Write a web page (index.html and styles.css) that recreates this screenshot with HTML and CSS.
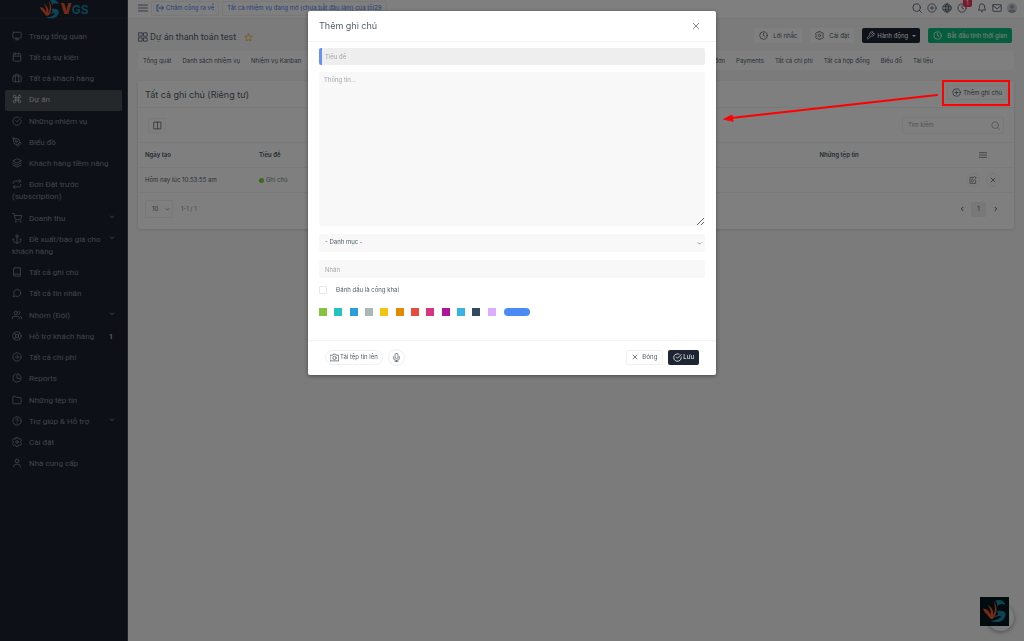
FILE: index.html
```html
<!DOCTYPE html>
<html lang="vi">
<head>
<meta charset="utf-8">
<meta name="viewport" content="width=device-width, initial-scale=1">
<title>Dự án thanh toán test</title>
<link rel="stylesheet" href="styles.css">
</head>
<body>
<svg class="sprite" aria-hidden="true">
  <symbol id="monitor" viewBox="0 0 24 24"><rect x="2" y="3" width="20" height="14" rx="2"/><path d="M8 21h8M12 17v4"/></symbol>
  <symbol id="calendar" viewBox="0 0 24 24"><rect x="3" y="4" width="18" height="18" rx="2"/><path d="M16 2v4M8 2v4M3 10h18"/></symbol>
  <symbol id="case" viewBox="0 0 24 24"><rect x="2" y="7" width="20" height="14" rx="2"/><path d="M8 21V5a2 2 0 0 1 2-2h4a2 2 0 0 1 2 2v16"/></symbol>
  <symbol id="command" viewBox="0 0 24 24"><path d="M18 3a3 3 0 0 0-3 3v12a3 3 0 1 0 3-3H6a3 3 0 1 0 3 3V6a3 3 0 1 0-3 3h12a3 3 0 0 0 0-6z"/></symbol>
  <symbol id="check" viewBox="0 0 24 24"><path d="M22 11v1a10 10 0 1 1-6-9.100M22 4 12 14l-3-3"/></symbol>
  <symbol id="pen" viewBox="0 0 24 24"><path d="m12 19 7-7 3 3-7 7zM18 13l-1.500-7.500L2 2l3.500 14.500L13 18zM2 2l7.600 7.600"/><circle cx="11" cy="11" r="2"/></symbol>
  <symbol id="layers" viewBox="0 0 24 24"><path d="M12 2 2 7l10 5 10-5zM2 12l10 5 10-5M2 17l10 5 10-5"/></symbol>
  <symbol id="repeat" viewBox="0 0 24 24"><path d="m17 1 4 4-4 4M3 11V9a4 4 0 0 1 4-4h14M7 23l-4-4 4-4M21 13v2a4 4 0 0 1-4 4H3"/></symbol>
  <symbol id="cart" viewBox="0 0 24 24"><circle cx="9" cy="21" r="1"/><circle cx="20" cy="21" r="1"/><path d="M1 1h4l2.700 13.400a2 2 0 0 0 2 1.600h9.700a2 2 0 0 0 2-1.600L23 6H6"/></symbol>
  <symbol id="anchor" viewBox="0 0 24 24"><circle cx="12" cy="5" r="3"/><path d="M12 22V8M5 12H2a10 10 0 0 0 20 0h-3"/></symbol>
  <symbol id="book" viewBox="0 0 24 24"><path d="M4 19.500A2.500 2.500 0 0 1 6.500 17H20M6.500 2H20v20H6.500A2.500 2.500 0 0 1 4 19.500v-15A2.500 2.500 0 0 1 6.500 2z"/></symbol>
  <symbol id="message" viewBox="0 0 24 24"><path d="M21 11.500a8.400 8.400 0 0 1-12.700 7.600L3 21l1.900-5.700A8.400 8.400 0 1 1 21 11.500z"/></symbol>
  <symbol id="users" viewBox="0 0 24 24"><path d="M17 21v-2a4 4 0 0 0-4-4H5a4 4 0 0 0-4 4v2M23 21v-2a4 4 0 0 0-3-3.900M16 3.100a4 4 0 0 1 0 7.800"/><circle cx="9" cy="7" r="4"/></symbol>
  <symbol id="buoy" viewBox="0 0 24 24"><circle cx="12" cy="12" r="10"/><circle cx="12" cy="12" r="4"/><path d="m5 5 4.200 4.200M14.800 14.800 19 19M14.800 9.200 19 5M5 19l4.200-4.200"/></symbol>
  <symbol id="right" viewBox="0 0 24 24"><circle cx="12" cy="12" r="10"/><path d="m12 16 4-4-4-4M8 12h8"/></symbol>
  <symbol id="pie" viewBox="0 0 24 24"><path d="M21.200 15.900A10 10 0 1 1 8 2.800M22 12A10 10 0 0 0 12 2v10z"/></symbol>
  <symbol id="folder" viewBox="0 0 24 24"><path d="M22 19a2 2 0 0 1-2 2H4a2 2 0 0 1-2-2V5a2 2 0 0 1 2-2h5l2 3h9a2 2 0 0 1 2 2z"/></symbol>
  <symbol id="help" viewBox="0 0 24 24"><circle cx="12" cy="12" r="10"/><path d="M9 9a3 3 0 0 1 5.900 1c0 2-3 3-3 3M12 17v.1"/></symbol>
  <symbol id="gear" viewBox="0 0 24 24"><circle cx="12" cy="12" r="3"/><path d="M10 1h4l1 3 2 1 3-1 3 4-2 2v4l2 2-3 4-3-1-2 1-1 3h-4l-1-3-2-1-3 1-3-4 2-2v-4L1 8l3-4 3 1 2-1z"/></symbol>
  <symbol id="user" viewBox="0 0 24 24"><path d="M20 22v-2a5 5 0 0 0-5-5H9a5 5 0 0 0-5 5v2"/><circle cx="12" cy="7" r="4.500"/></symbol>
  <symbol id="down" viewBox="0 0 24 24"><path d="m5 8 7 7 7-7"/></symbol>
  <symbol id="prev" viewBox="0 0 24 24"><path d="m16 5-7 7 7 7"/></symbol>
  <symbol id="next" viewBox="0 0 24 24"><path d="m8 5 7 7-7 7"/></symbol>
  <symbol id="menu" viewBox="0 0 24 24"><path d="M1 5h22M1 12h22M1 19h22"/></symbol>
  <symbol id="logout" viewBox="0 0 24 24"><path d="M8 21H3V3h5M8 12h14M17 6l6 6-6 6"/></symbol>
  <symbol id="grid" viewBox="0 0 24 24"><path d="M2 2h8v8H2zM14 2h8v8h-8zM2 14h8v8H2zM14 14h8v8h-8z"/></symbol>
  <symbol id="star" viewBox="0 0 24 24"><path d="m12 2 3.100 6.300 6.900 1-5 4.900 1.200 6.800L12 17.800 5.800 21 7 14.200 2 9.300l6.900-1z"/></symbol>
  <symbol id="search" viewBox="0 0 24 24"><circle cx="11" cy="11" r="9"/><path d="m17.500 17.500 5 5"/></symbol>
  <symbol id="plus" viewBox="0 0 24 24"><circle cx="12" cy="12" r="10"/><path d="M12 8v8M8 12h8"/></symbol>
  <symbol id="globe" viewBox="0 0 24 24"><circle cx="12" cy="12" r="10"/><ellipse cx="12" cy="12" rx="4.500" ry="10"/><path d="M12 2v20M3 8h18M3 16h18"/></symbol>
  <symbol id="clock" viewBox="0 0 24 24"><circle cx="12" cy="12" r="10"/><path d="M12 6v6l4 2"/></symbol>
  <symbol id="bell" viewBox="0 0 24 24"><path d="M18 8A6 6 0 0 0 6 8c0 7-3 9-3 9h18s-3-2-3-9M13.700 21a2 2 0 0 1-3.400 0"/></symbol>
  <symbol id="mail" viewBox="0 0 24 24"><rect x="2" y="4" width="20" height="16" rx="1"/><path d="m2 6 10 8 10-8"/></symbol>
  <symbol id="wrench" viewBox="0 0 24 24"><path d="M14.700 6.300a1 1 0 0 0 0 1.400l1.600 1.600a1 1 0 0 0 1.400 0l3.800-3.800a6 6 0 0 1-8 8l-6.900 6.900a2.100 2.100 0 0 1-3-3l6.900-6.900a6 6 0 0 1 8-8z"/></symbol>
  <symbol id="columns" viewBox="0 0 24 24"><path d="M3 3h18v18H3zM12 3v18"/></symbol>
  <symbol id="edit" viewBox="0 0 24 24"><path d="M11 4H3v18h17v-8M18 2l4 4-9.500 9.500L8 16l.6-4.400z"/></symbol>
  <symbol id="close" viewBox="0 0 24 24"><path d="m4 4 16 16M20 4 4 20"/></symbol>
  <symbol id="camera" viewBox="0 0 24 24"><path d="M1 6h6l2-3h6l2 3h6v15H1z"/><circle cx="12" cy="13" r="4.500"/></symbol>
  <symbol id="mic" viewBox="0 0 24 24"><rect x="8" y="1" width="8" height="14" rx="4"/><path d="M4 10v2a8 8 0 0 0 16 0v-2M12 20v3M8 23h8"/></symbol>
  <symbol id="bird" viewBox="0 0 48 48">
    <path class="orange" d="M2 18c8 1 13 5 14 13 2-7 0-13-5-20 8 5 12 12 10 21 5-8 5-17 1-28 8 10 8 22 1 32-3 4-7 3-9-1C11 30 4 26 2 18z"/>
    <path class="teal" d="M25 4c9-5 17-1 20 7-8-3-13-1-16 4 1-4 0-8-4-11zM29 23c10-2 18 2 16 9-3 11-14 15-29 10 11-1 18-4 21-9-5-1-9 0-13 3 0-3 3-5 7-6-1-3-1-5-2-7z"/>
  </symbol>
</svg>

<div class="app">
  <aside class="sidebar">
    <a class="brand" href="#" aria-label="VGS">
      <svg class="brand-bird"><use href="#bird"/></svg>
      <span class="brand-name"><b>V</b>GS</span>
    </a>
    <ul class="nav">
      <li><a href="#"><svg><use href="#monitor"/></svg>Trang tổng quan</a></li>
      <li><a href="#"><svg><use href="#calendar"/></svg>Tất cả sự kiện</a></li>
      <li><a href="#"><svg><use href="#case"/></svg>Tất cả khách hàng</a></li>
      <li><a class="active" href="#"><svg><use href="#command"/></svg>Dự án</a></li>
      <li><a href="#"><svg><use href="#check"/></svg>Những nhiệm vụ</a></li>
      <li><a href="#"><svg><use href="#pen"/></svg>Biểu đồ</a></li>
      <li><a href="#"><svg><use href="#layers"/></svg>Khách hàng tiềm năng</a></li>
      <li><a href="#"><svg><use href="#repeat"/></svg>Đơn Đặt trước (subscription)</a></li>
      <li><a class="more" href="#"><span><svg><use href="#cart"/></svg>Doanh thu</span><svg class="chev"><use href="#down"/></svg></a></li>
      <li><a class="more" href="#"><span><svg><use href="#anchor"/></svg>Đề xuất/báo giá cho khách hàng</span><svg class="chev"><use href="#down"/></svg></a></li>
      <li><a href="#"><svg><use href="#book"/></svg>Tất cả ghi chú</a></li>
      <li><a href="#"><svg><use href="#message"/></svg>Tất cả tin nhắn</a></li>
      <li><a class="more" href="#"><span><svg><use href="#users"/></svg>Nhóm (Đội)</span><svg class="chev"><use href="#down"/></svg></a></li>
      <li><a class="more" href="#"><span><svg><use href="#buoy"/></svg>Hỗ trợ khách hàng</span><b class="count">1</b></a></li>
      <li><a href="#"><svg><use href="#right"/></svg>Tất cả chi phí</a></li>
      <li><a href="#"><svg><use href="#pie"/></svg>Reports</a></li>
      <li><a href="#"><svg><use href="#folder"/></svg>Những tệp tin</a></li>
      <li><a class="more" href="#"><span><svg><use href="#help"/></svg>Trợ giúp &amp; Hỗ trợ</span><svg class="chev"><use href="#down"/></svg></a></li>
      <li><a href="#"><svg><use href="#gear"/></svg>Cài đặt</a></li>
      <li><a href="#"><svg><use href="#user"/></svg>Nhà cung cấp</a></li>
    </ul>
  </aside>

  <main class="main">
    <header class="topbar">
      <button class="icon-btn" aria-label="Menu"><svg><use href="#menu"/></svg></button>
      <a class="top-link" href="#"><svg><use href="#logout"/></svg>Chấm công ra về</a>
      <a class="top-link" href="#">Tất cả nhiệm vụ đang mở (chưa bắt đầu làm) của tôi29</a>
      <div class="tools">
        <button class="icon-btn" aria-label="Tìm kiếm"><svg><use href="#search"/></svg></button>
        <button class="icon-btn" aria-label="Thêm"><svg><use href="#plus"/></svg></button>
        <button class="icon-btn" aria-label="Ngôn ngữ"><svg><use href="#globe"/></svg></button>
        <button class="icon-btn timer" aria-label="Thời gian"><svg><use href="#clock"/></svg><span class="badge">1</span></button>
        <button class="icon-btn" aria-label="Thông báo"><svg><use href="#bell"/></svg></button>
        <button class="icon-btn" aria-label="Thư"><svg><use href="#mail"/></svg></button>
        <svg class="avatar" viewBox="0 0 24 24"><circle class="disc" cx="12" cy="12" r="12"/><circle cx="12" cy="9" r="5"/><path d="M3 20c2-6 16-6 18 0-5 5-13 5-18 0z"/></svg>
      </div>
    </header>

    <div class="content">
      <div class="heading">
        <div class="heading-title">
          <svg><use href="#grid"/></svg>
          <h1>Dự án thanh toán test</h1>
          <svg class="star"><use href="#star"/></svg>
        </div>
        <div class="actions">
          <button class="btn"><svg><use href="#clock"/></svg>Lời nhắc</button>
          <button class="btn"><svg><use href="#gear"/></svg>Cài đặt</button>
          <button class="btn dark tight"><svg><use href="#wrench"/></svg>Hành động<i class="caret"></i></button>
          <button class="btn green"><svg><use href="#clock"/></svg>Bắt đầu tính thời gian</button>
        </div>
      </div>

      <nav class="tabs">
        <div class="tab-group"><a href="#">Tổng quát</a><a href="#">Danh sách nhiệm vụ</a><a href="#">Nhiệm vụ Kanban</a></div>
        <div class="tab-group end"><a href="#">Hóa đơn</a><a href="#">Payments</a><a href="#">Tất cả chi phí</a><a href="#">Tất cả hợp đồng</a><a href="#">Biểu đồ</a><a href="#">Tài liệu</a></div>
      </nav>

      <section class="card">
        <div class="card-head">
          <h2>Tất cả ghi chú (Riêng tư)</h2>
          <button class="btn tight outline"><svg><use href="#plus"/></svg>Thêm ghi chú</button>
        </div>
        <div class="card-tools">
          <button class="btn square" aria-label="Cột"><svg><use href="#columns"/></svg></button>
          <label class="search"><input type="search" placeholder="Tìm kiếm" aria-label="Tìm kiếm"><svg><use href="#search"/></svg></label>
        </div>
        <table class="table">
          <thead><tr><th class="c-date">Ngày tạo</th><th class="c-title">Tiêu đề</th><th class="c-files">Những tệp tin</th><th class="c-act"><svg><use href="#menu"/></svg></th></tr></thead>
          <tbody><tr><td>Hôm nay lúc 10:53:55 am</td><td><span class="note"><i class="dot"></i>Ghi chú</span></td><td></td>
            <td><div class="row-act"><button class="round" aria-label="Sửa"><svg><use href="#edit"/></svg></button><button class="round" aria-label="Xóa"><svg class="small"><use href="#close"/></svg></button></div></td></tr></tbody>
        </table>
        <div class="card-foot">
          <select class="per-page" aria-label="Số dòng"><option>10</option></select>
          <svg class="foot-chev"><use href="#down"/></svg>
          <span class="range">1-1 / 1</span>
          <div class="pager"><button aria-label="Trước"><svg><use href="#prev"/></svg></button><button class="current">1</button><button aria-label="Sau"><svg><use href="#next"/></svg></button></div>
        </div>
      </section>
    </div>
  </main>
</div>

<div class="chat"><span class="chat-disc"></span><svg><use href="#bird"/></svg></div>

<div class="overlay">
  <form class="modal" role="dialog" aria-labelledby="modal-title">
    <div class="modal-head">
      <h3 id="modal-title">Thêm ghi chú</h3>
      <button type="button" class="icon-btn" aria-label="Đóng"><svg class="mid"><use href="#close"/></svg></button>
    </div>
    <div class="modal-body">
      <input class="field title-field" type="text" placeholder="Tiêu đề" aria-label="Tiêu đề">
      <textarea class="field" placeholder="Thông tin..." aria-label="Thông tin"></textarea>
      <div class="select-wrap">
        <select class="field" aria-label="Danh mục"><option>- Danh mục -</option></select>
        <svg><use href="#down"/></svg>
      </div>
      <input class="field labels" type="text" placeholder="Nhãn" aria-label="Nhãn">
      <label class="public"><input type="checkbox">Đánh dấu là công khai</label>
      <div class="colors">
        <div class="swatches">
          <button type="button" class="s1" aria-label="Xanh lá"></button><button type="button" class="s2" aria-label="Ngọc"></button><button type="button" class="s3" aria-label="Xanh dương"></button><button type="button" class="s4" aria-label="Xám"></button><button type="button" class="s5" aria-label="Vàng"></button><button type="button" class="s6" aria-label="Cam"></button><button type="button" class="s7" aria-label="Đỏ"></button><button type="button" class="s8" aria-label="Hồng"></button><button type="button" class="s9" aria-label="Tím"></button><button type="button" class="s10" aria-label="Xanh nhạt"></button><button type="button" class="s11" aria-label="Xanh đen"></button><button type="button" class="s12" aria-label="Tím nhạt"></button>
        </div>
        <button type="button" class="pill" aria-label="Chọn màu"></button>
      </div>
    </div>
    <div class="modal-foot">
      <button type="button" class="btn upload"><svg><use href="#camera"/></svg>Tải tệp tin lên</button>
      <button type="button" class="btn mic" aria-label="Ghi âm"><svg><use href="#mic"/></svg></button>
      <button type="button" class="btn cancel"><svg class="small"><use href="#close"/></svg>Đóng</button>
      <button type="submit" class="btn dark save"><svg><use href="#check"/></svg>Lưu</button>
    </div>
  </form>
</div>

<svg class="callout" aria-hidden="true">
  <rect x="943" y="81" width="66" height="24"/>
  <path d="M937 95 731 118"/>
  <path class="tip" d="m724 119 8-4 1 6z"/>
</svg>
</body>
</html>
```
FILE: styles.css
```css
* { box-sizing: border-box; }

body {
  margin: 0;
  background: #f6f6f6;
  color: #4e5e6a;
  font: 6px/12px Inter, "Noto Sans", sans-serif;
}

h1, h2, h3 { margin: 0; font-weight: 400; }
a { color: inherit; text-decoration: none; }
button, input, select, textarea { font: inherit; color: inherit; margin: 0; }
button { border: 0; padding: 0; background: none; }

svg {
  width: 10px;
  height: 10px;
  flex: none;
  fill: none;
  stroke: currentColor;
  stroke-width: 2;
  stroke-linecap: round;
  stroke-linejoin: round;
}
svg.small { width: 6px; height: 6px; stroke-width: 3; }
svg.mid { width: 8px; height: 8px; stroke-width: 3; }
.sprite { position: absolute; width: 0; height: 0; }
.orange { fill: #e8572b; stroke: none; }
.teal { fill: #1d87ac; stroke: none; }

.app { display: flex; min-height: 100vh; }

/* Sidebar */
.sidebar {
  flex: none;
  width: 128px;
  background: #1b232e;
  border-right: 1px solid #3c4654;
  color: #808890;
  font-family: Roboto, "Noto Sans", sans-serif;
  font-size: 8px;
}
.brand {
  display: flex;
  align-items: center;
  justify-content: center;
  height: 19px;
  gap: 1px;
  border-bottom: 1px solid #222a35;
}
.brand-bird { width: 21px; height: 21px; }
.brand-name {
  color: #1d87ac;
  font-family: Inter, sans-serif;
  font-size: 12px;
  font-weight: 600;
}
.brand-name b { color: #e8572b; font-size: 14px; }
.nav { list-style: none; margin: 0; padding: 8px 5px; }
.nav li:nth-child(4n) { margin-bottom: 1px; }
.nav a { display: block; padding: 4px 7px 5px; border-radius: 2px; }
.nav a svg { margin-right: 7px; vertical-align: -2px; }
.nav a.active { background: #4b5057; color: #c4c8cc; }
.nav a.more { display: flex; justify-content: space-between; }
.nav a .chev { width: 6px; height: 6px; margin: 1px 0; stroke-width: 4; }
.count { font-size: 7px; margin-right: 2px; color: #b4bac0; }

/* Top bar */
.main { flex: 1; min-width: 0; }
.topbar {
  display: flex;
  align-items: center;
  height: 19px;
  padding: 0 7px 2px 10px;
  background: #fff;
  border-bottom: 1px solid #eee;
}
.icon-btn { display: flex; }
.top-link {
  display: flex;
  align-items: center;
  gap: 2px;
  height: 15px;
  margin-left: 3px;
  padding: 0 4px;
  border: 1px solid #f0f0f0;
  border-radius: 2px;
  color: #5580f0;
}
.top-link svg { width: 8px; height: 8px; stroke-width: 3; }
.tools { display: flex; align-items: center; gap: 5px; margin-left: auto; }
.timer { position: relative; margin-right: 5px; }
.badge {
  position: absolute;
  left: 6px;
  top: -5px;
  width: 9px;
  height: 9px;
  border-radius: 2px;
  background: #f5325c;
  color: #fff;
  line-height: 9px;
}
.avatar { fill: #9aa0aa; stroke: none; }
.avatar .disc { fill: #d0d2d8; }

/* Page heading */
.content { padding: 9px 10px; }
.heading { display: flex; justify-content: space-between; height: 15px; }
.heading-title { display: flex; align-items: center; gap: 2px; padding-top: 3px; }
.heading h1 { font-family: Roboto, "Noto Sans", sans-serif; font-size: 9px; }
.heading .star { width: 9px; height: 9px; margin-left: 6px; color: #f2ae1c; }
.actions { display: flex; gap: 8px; margin-right: 2px; }
.btn {
  display: flex;
  align-items: center;
  justify-content: center;
  gap: 5px;
  height: 15px;
  padding: 0 5px;
  border: 0;
  border-radius: 2px;
  background: #fff;
  white-space: nowrap;
}
.btn svg { width: 9px; height: 9px; }
.btn.tight { gap: 2px; padding: 0 4px; }
.btn.outline { border: 1px solid #f2f2f2; }
.btn.dark { background: #1d2632; color: #fff; }
.btn.green { background: #0abb7a; color: #fff; }
.caret {
  margin-left: 2px;
  border: 2px solid transparent;
  border-top-color: currentColor;
  border-bottom: 0;
}

.tabs {
  display: flex;
  justify-content: space-between;
  margin-top: 8px;
  padding: 4px 5px 3px;
  border-radius: 2px;
  background: #fff;
}
.tab-group { display: flex; gap: 11px; }
.tab-group.end { margin-right: 76px; }

/* Notes card */
.card {
  margin-top: 11px;
  border-radius: 2px;
  background: #fff;
  box-shadow: 0 1px 3px #0002;
}
.card-head, .card-tools, .card-foot {
  display: flex;
  align-items: center;
  padding: 0 7px;
}
.card-head { justify-content: space-between; height: 27px; border-bottom: 1px solid #f2f2f2; }
.card-head h2 { padding-top: 2px; font-size: 9px; }
.card-head .btn { margin-bottom: 3px; }
.card-tools { justify-content: space-between; height: 34px; padding: 0 10px; }
.btn.square { width: 18px; border: 1px solid #f2f2f2; }
.search {
  display: flex;
  align-items: center;
  width: 102px;
  height: 17px;
  padding: 0 3px 0 5px;
  border: 1px solid #f2f2f2;
  border-radius: 2px;
  color: #9aa4ac;
}
.search input {
  flex: 1;
  min-width: 0;
  padding: 0;
  border: 0;
  outline: 0;
  background: none;
}
.search svg { width: 9px; height: 9px; }
::placeholder { color: #a2a8ac; opacity: 1; }

.table {
  width: 100%;
  table-layout: fixed;
  border-collapse: collapse;
  border-top: 1px solid #f2f2f2;
}
.table th, .table td {
  height: 25px;
  padding: 0 7px;
  border-bottom: 1px solid #f2f2f2;
  text-align: left;
}
.table th { font-weight: 600; color: #455a64; }
.c-date { width: 13%; }
.c-title { width: 64%; }
.c-files { width: 16%; }
.c-act { width: 7%; }
.table th.c-act { text-align: center; }
.c-act svg { width: 8px; height: 8px; vertical-align: middle; }
.note { display: flex; align-items: center; gap: 2px; color: #76838d; }
.dot { width: 5px; height: 5px; border-radius: 50%; background: #7bd32e; }
.row-act { display: flex; justify-content: center; gap: 6px; }
.round {
  display: flex;
  align-items: center;
  justify-content: center;
  flex: none;
  width: 14px;
  height: 14px;
  border: 1px solid #f2f2f2;
  border-radius: 50%;
}
.round svg { width: 8px; height: 8px; }
.round svg.small { width: 6px; height: 6px; }
.card-foot { height: 36px; padding-bottom: 4px; }
.per-page {
  appearance: none;
  width: 28px;
  height: 18px;
  padding: 0 6px;
  border: 1px solid #f0f0f0;
  border-radius: 2px;
  background: #fff;
}
.foot-chev { width: 5px; height: 5px; margin: 0 11px 0 -8px; stroke-width: 3; }
.range { color: #8c969e; }
.pager { display: flex; align-items: center; gap: 6px; margin: 0 8px 0 auto; }
.pager button { width: 7px; }
.pager svg { display: block; width: 6px; height: 6px; margin: auto; stroke-width: 4; }
.pager .current { width: 15px; height: 15px; border-radius: 2px; background: #f1f1f1; }

/* Chat launcher */
.chat { position: fixed; right: 15px; bottom: 15px; }
.chat-disc {
  position: absolute;
  right: -5px;
  bottom: -5px;
  width: 27px;
  height: 27px;
  border-radius: 50%;
  background: #f6f6f6;
  box-shadow: 0 1px 4px #0006;
}
.chat svg {
  position: relative;
  display: block;
  width: 29px;
  height: 29px;
  padding: 2px;
  background: #04161c;
}

/* Dialog */
.overlay { position: fixed; inset: 0; overflow: auto; background: #00000080; }
.modal {
  width: 408px;
  max-width: 100%;
  margin: 11px auto;
  border-radius: 2px;
  background: #fff;
  box-shadow: 0 1px 4px #0006;
}
.modal-head {
  display: flex;
  align-items: center;
  justify-content: space-between;
  height: 31px;
  padding: 0 16px 0 11px;
  border-bottom: 1px solid #f2f2f2;
}
.modal-head h3 { font-size: 9px; }
.modal-head svg { color: #7c868e; }
.modal-body { padding: 6px 11px 24px; }
.field {
  display: block;
  width: 100%;
  height: 18px;
  padding: 0 6px;
  border: 0;
  border-radius: 2px;
  outline: 0;
  background: #f8f8f8;
}
.title-field {
  height: 17px;
  padding-left: 3px;
  border-left: 3px solid #6690f4;
  background: #eee;
}
textarea.field { height: 154px; margin-top: 7px; padding: 2px 5px; resize: vertical; }
.select-wrap { display: flex; align-items: center; margin-top: 8px; }
.select-wrap select { appearance: none; padding-bottom: 2px; }
.select-wrap svg { width: 5px; height: 5px; margin-left: -8px; stroke-width: 3; }
.labels { margin-top: 8px; }
.public { display: flex; align-items: center; gap: 9px; margin-top: 6px; }
.public input {
  appearance: none;
  width: 8px;
  height: 8px;
  border: 1px solid #e6e8ea;
  border-radius: 1px;
}
.colors { display: flex; align-items: center; margin-top: 12px; gap: 1px; }
.swatches { display: grid; grid-template-columns: repeat(12, 1fr); width: 184px; }
.swatches button { width: 8px; height: 8px; }
.s1 { background: #86c440; }
.s2 { background: #29c2c2; }
.s3 { background: #2d9cdb; }
.s4 { background: #aab7b7; }
.s5 { background: #f1c40f; }
.s6 { background: #e18a00; }
.s7 { background: #e74c3c; }
.s8 { background: #d43480; }
.s9 { background: #ad159e; }
.s10 { background: #37b4e1; }
.s11 { background: #34495e; }
.s12 { background: #dbadff; }
.pill { width: 26px; height: 8px; border-radius: 4px; background: #4a8af4; }
.modal-foot {
  display: flex;
  align-items: center;
  gap: 5px;
  height: 35px;
  padding: 0 17px 2px;
  border-top: 1px solid #f2f2f2;
}
.upload { gap: 1px; padding: 0 4px; border: 1px solid #f0f0f0; border-radius: 8px; }
.mic { width: 17px; height: 17px; padding: 0; border: 1px solid #f0f0f0; border-radius: 50%; }
.btn.cancel { gap: 4px; margin-left: auto; border: 1px solid #f0f0f0; }
.btn.cancel svg { width: 6px; height: 6px; }
.save { gap: 1px; }

/* Pointer to the add button */
.callout {
  position: absolute;
  left: 0;
  top: 0;
  width: 100%;
  height: 130px;
  pointer-events: none;
  stroke: #f00;
  stroke-linejoin: miter;
}
.callout .tip { fill: #f00; stroke-width: 1; }
```
